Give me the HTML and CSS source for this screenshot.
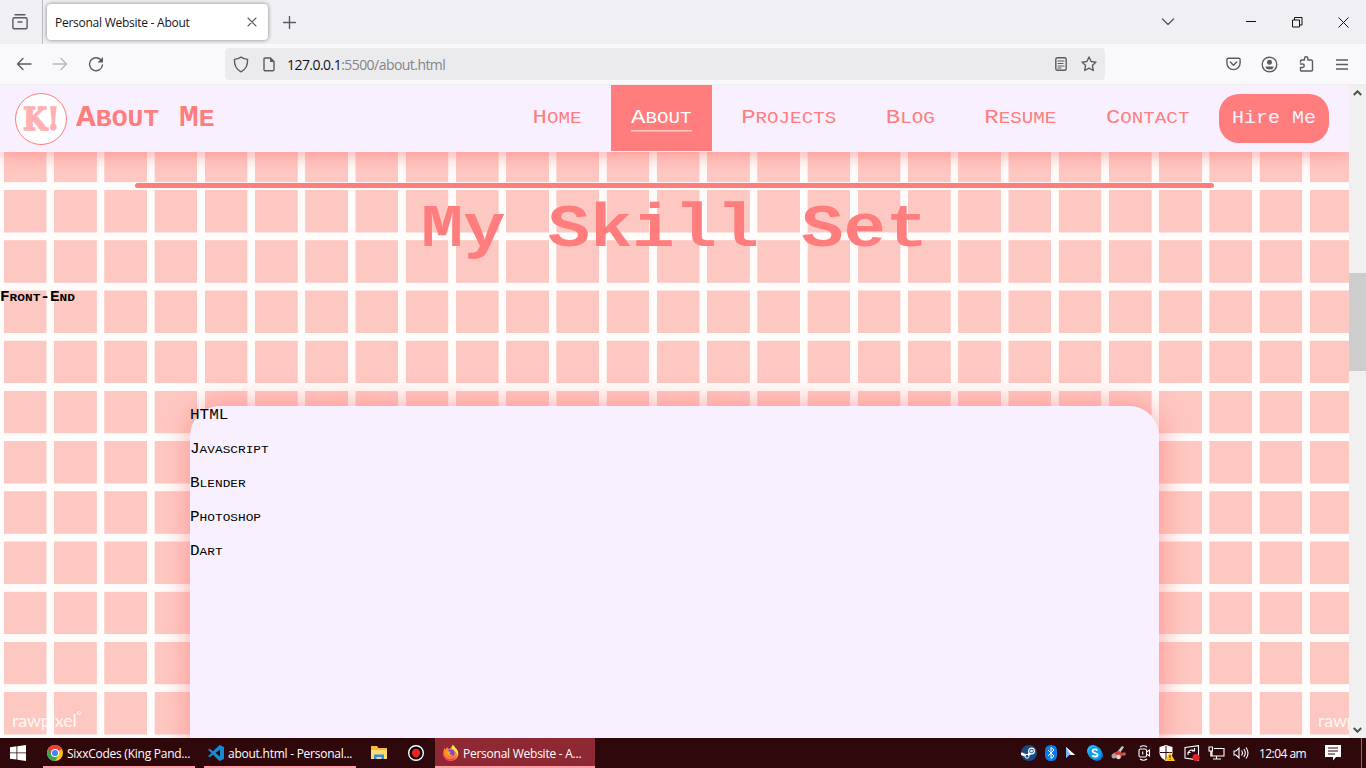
FILE: index.html
```html
<!DOCTYPE html>
<html lang="en">
<head>
<meta charset="utf-8">
<title>Personal Website - About</title>
<link rel="stylesheet" href="styles.css">
</head>
<body>
<div class="tabbar">
  <div class="tabview"><svg width="18" height="18" viewBox="0 0 18 18" class="ic"><path d="M4 1.8h10M3.5 4.8h11a1.6 1.6 0 0 1 1.6 1.6v7.5a1.9 1.9 0 0 1-1.9 1.9H3.8a1.9 1.9 0 0 1-1.9-1.9V6.4a1.6 1.6 0 0 1 1.6-1.6zM7 9h4"/></svg></div>
  <div class="tab"><span class="tabtitle">Personal Website - About</span><svg width="10" height="10" viewBox="0 0 10 10" class="ic thin"><path d="M1 1l8 8M9 1L1 9"/></svg></div>
  <svg width="13" height="13" viewBox="0 0 13 13" class="ic plus"><path d="M6.5 .5v12M.5 6.5h12"/></svg>
  <div class="winbtns">
    <svg width="14" height="8" viewBox="0 0 14 8" class="ic"><path d="M1.5 1L7 6.5 12.500 1"/></svg>
    <svg width="10" height="10" viewBox="0 0 10 10" class="win"><path d="M0 4.500h10"/></svg>
    <svg width="11" height="11" viewBox="0 0 11 11" class="win"><path d="M.5 3h7v7h-7zM2.500 3V.5h7.500v7.500H7.500"/></svg>
    <svg width="11" height="11" viewBox="0 0 11 11" class="win"><path d="M.5.5l10 10M10.500.5l-10 10"/></svg>
  </div>
</div>
<div class="toolbar">
  <div class="navs">
    <svg width="16" height="14" viewBox="0 0 16 14" class="ic"><path d="M7 1.500L1.500 7 7 12.500M1.500 7H15"/></svg>
    <svg width="16" height="14" viewBox="0 0 16 14" class="ic dim"><path d="M9 1.500L14.500 7 9 12.500M14.500 7H1"/></svg>
    <svg width="16" height="16" viewBox="0 0 16 16" class="ic"><path d="M13.700 5A6.500 6.500 0 1 0 14.500 9"/><path d="M15 1v5.500H9.500z" class="fill"/></svg>
  </div>
  <div class="urlbar">
    <svg width="16" height="17" viewBox="0 0 16 17" class="ic"><path d="M8 1.200c2 1.300 4.200 2 6.600 2.200.2 5.500-1.600 10-6.600 12.400C3 13.400 1.200 8.900 1.400 3.400 3.800 3.200 6 2.500 8 1.200z"/></svg>
    <svg width="12" height="15" viewBox="0 0 12 15" class="ic"><path d="M2 1h5.500L11 4.500V12.500a1.300 1.300 0 0 1-1.300 1.300H2.300A1.300 1.300 0 0 1 1 12.500V2a1 1 0 0 1 1-1z"/><path d="M7 .8V5h4.200z" class="fill"/></svg>
    <span class="url">127.0.0.1<span class="path">:5500/about.html</span></span>
    <svg width="12" height="14" viewBox="0 0 12 14" class="ic reader"><rect x=".8" y=".8" width="10.400" height="12.400" rx="1.500"/><path d="M3 4h6M3 6.500h5M3 9h6M3 11h3" class="thin"/></svg>
    <svg width="16" height="16" viewBox="0 0 16 16" class="ic"><path d="M8 1l2.100 4.500 4.900.6-3.600 3.400.9 5L8 12.100l-4.300 2.400.9-5L1 6.100l4.900-.6z"/></svg>
  </div>
  <div class="tools">
    <svg width="15" height="14" viewBox="0 0 15 14" class="ic"><path d="M2.300 1.200h10.400a1.400 1.400 0 0 1 1.400 1.400V6a6.600 6.600 0 0 1-13.200 0V2.600a1.400 1.400 0 0 1 1.400-1.400zM4.300 5l3.200 3.200L10.700 5"/></svg>
    <svg width="17" height="17" viewBox="0 0 17 17" class="ic"><circle cx="8.500" cy="8.500" r="7.300"/><circle cx="8.500" cy="6.200" r="2.500" class="fill"/><path d="M4.500 10.500h8q0 3-4 3t-4-3z" class="fill"/></svg>
    <svg width="15" height="16" viewBox="0 0 15 16" class="ic"><path d="M1.500 6V5a1 1 0 0 1 1-1H5.500V2.500a1.700 1.700 0 0 1 3.400 0V4H12a1.500 1.500 0 0 1 1.500 1.500V14a1 1 0 0 1-1 1H2.500a1 1 0 0 1-1-1V11.500H3.500a1.700 1.700 0 0 0 0-3.500H1.500"/></svg>
    <svg width="12" height="11" viewBox="0 0 12 11" class="ic"><path d="M0 1h12M0 5.500h12M0 10h12"/></svg>
  </div>
</div>
<div class="viewport">
  <div class="page">
    <header class="header">
      <div class="logo"><span>K!</span></div>
      <h1 class="brand caps squat">A<small>BOUT</small> M<small>E</small></h1>
      <nav class="nav">
        <a class="caps"><span class="squat">H<small>OME</small></span></a>
        <a class="caps active"><span class="squat">A<small>BOUT</small></span></a>
        <a class="caps"><span class="squat">P<small>ROJECTS</small></span></a>
        <a class="caps"><span class="squat">B<small>LOG</small></span></a>
        <a class="caps"><span class="squat">R<small>ESUME</small></span></a>
        <a class="caps"><span class="squat">C<small>ONTACT</small></span></a>
      </nav>
      <button class="hire"><span class="squat">Hire Me</span></button>
    </header>
    <main class="content">
      <div class="rule"></div>
      <h2 class="title squat">My Skill Set</h2>
      <h4 class="group caps squat">F<small>RONT</small>-E<small>ND</small></h4>
      <section class="card">
        <p class="caps squat">HTML</p>
        <p class="caps squat">J<small>AVASCRIPT</small></p>
        <p class="caps squat">B<small>LENDER</small></p>
        <p class="caps squat">P<small>HOTOSHOP</small></p>
        <p class="caps squat">D<small>ART</small></p>
      </section>
    </main>
    <span class="mark">rawpixel<sup>°</sup></span>
    <span class="mark second">rawp</span>
  </div>
  <div class="scroll">
    <svg width="9" height="6" viewBox="0 0 9 6"><path d="M.8 5L4.500 1.300 8.200 5"/></svg>
    <div class="thumb"></div>
    <svg width="9" height="6" viewBox="0 0 9 6" class="down"><path d="M.8 1L4.500 4.700 8.200 1"/></svg>
  </div>
</div>
<div class="taskbar">
  <div class="start"><svg width="16" height="16" viewBox="0 0 16 16"><path fill="#fff" d="M0 2.200L6.500 1.300v6.200H0zM7.300 1.200L16 0v7.500H7.300zM0 8.300h6.500v6.300L0 13.700zM7.300 8.300H16V16l-8.700-1.200z"/></svg></div>
  <div class="app">
    <svg width="16" height="16" viewBox="0 0 16 16"><circle cx="8" cy="8" r="8" fill="#fbc116"/><path d="M8 8L1.100 4A8 8 0 0 1 14.900 4z" fill="#ea4335"/><path d="M1.100 4A8 8 0 0 0 8 16l3.500-6L8 8z" fill="#34a853"/><path d="M1.100 4L4.500 10 8 4h6.900A8 8 0 0 0 1.100 4z" fill="#ea4335"/><circle cx="8" cy="8" r="4" fill="#fff"/><circle cx="8" cy="8" r="3.100" fill="#4285f4"/></svg>
    <span>SixxCodes (King Pand...</span></div>
  <div class="app code">
    <svg width="16" height="16" viewBox="0 0 16 16"><path fill="#168bd2" d="M11.500 0L16 2v12l-4.500 2L5 9.700l-3.300 2.600L0 11.300 3.500 8 0 4.700l1.700-1L5 6.300zM12 4.500L7.500 8l4.500 3.500z"/></svg>
    <span>about.html - Personal...</span></div>
  <svg class="folder" width="16" height="14" viewBox="0 0 16 14"><path d="M0 0h6l1.500 2H16v11H0z" fill="#f5b93b"/><path d="M0 4h16v9H0z" fill="#ffdb73"/><path d="M3 13V8.500h10V13h-2.500v-2h-5v2z" fill="#3690da"/></svg>
  <svg class="rec" width="16" height="16" viewBox="0 0 16 16"><circle cx="8" cy="8" r="7.300" fill="#000" stroke="#fff" stroke-width="1.400"/><circle cx="8" cy="8" r="4.200" fill="#ef2420"/></svg>
  <div class="app current">
    <svg width="16" height="16" viewBox="0 0 16 16"><path d="M1.500 3l1.200 1.500L4 2l1.500 2C7.500 4 8.500 2 9.500 0c2 1 2.500 2.500 4 4 3.500 4 2 11.500-5.500 12C1 16-1.500 9.500 1.500 3z" fill="#ff8a24"/><path d="M9.500 0c2 1 2.500 2.500 4 4 2 2.500 2.200 5 1 7.500C14 7 11 5 8.300 3.500z" fill="#ffe14a"/><path d="M.5 8c1 5 5 6.500 8.500 5.500 2-.5 3-1.500 4-2.500-.5 3-3 5-5.500 5C3 16 0 12.500.5 8z" fill="#ff3a5c"/><circle cx="8" cy="8" r="3.600" fill="#7a45e0"/><path d="M3.500 6.500c2-.8 3 .5 4.500.3L6.500 8.500C7 10 9 10 10 9.500 8 12.500 3.500 11 3.500 6.500z" fill="#ffab2b"/></svg>
    <span>Personal Website - A...</span></div>
  <div class="tray">
    <svg width="16" height="16" viewBox="0 0 16 16"><circle cx="8" cy="8" r="8" fill="#1b4a80"/><path d="M0 8.500l6 2.500 3.500-3" stroke="#fff" stroke-width="2.600" fill="none"/><circle cx="10.500" cy="6" r="2.900" fill="#1b4a80" stroke="#fff" stroke-width="1.200"/><circle cx="10.500" cy="6" r="1.500" fill="#dce6f0"/><circle cx="6" cy="11.300" r="1.900" fill="#1b4a80" stroke="#fff"/></svg>
    <svg width="12" height="16" viewBox="0 0 12 16"><rect width="12" height="16" rx="5.500" fill="#0a7bea"/><path d="M3 5l6 6-3 2.500v-11L9 5l-6 6" stroke="#fff" fill="none"/></svg>
    <svg width="10" height="12" viewBox="0 0 10 12"><path d="M1 0l9 8H4l-3 3z" fill="#b9adff"/><path d="M1 0v11l3-3z" fill="#64bcff"/><path d="M1 0l9 8H6z" fill="#fff"/></svg>
    <svg class="skype" width="16" height="16" viewBox="0 0 16 16"><circle cx="6" cy="6" r="6" fill="#29b8f5"/><circle cx="10" cy="10" r="6" fill="#0a6fcb"/><circle cx="8" cy="8" r="6.700" fill="#0c9fe6"/><path d="M10.500 5.500C9.500 4 5.600 4 5.600 6.200S10.600 7.600 10.600 9.800 6.500 12 5.300 10.300" stroke="#fff" stroke-width="1.800" fill="none"/></svg>
    <svg width="15" height="14" viewBox="0 0 15 14"><path d="M6 6l5-6 2 1-4 6z" fill="#c9c4c5"/><path d="M2 7l6-2 5 3-4 4-6-1z" fill="#cb4437"/><circle cx="3" cy="10" r="2.500" fill="#aaa5a6"/><circle cx="7.500" cy="11" r="2.300" fill="#d9d5d5"/><circle cx="13" cy="8" r="1.800" fill="#b8625a"/></svg>
    <svg class="cam" width="13" height="16" viewBox="0 0 13 16"><rect x="1" y="4" width="7.500" height="8" rx="1.500"/><path d="M8.500 7L11.500 5v6L8.500 9M2 2Q5.500-.5 9 2M2 14q3.500 2.500 7 0M4.700 6.500v3"/></svg>
    <svg width="16" height="16" viewBox="0 0 16 16"><path d="M7 0l6.500 2v6c0 3-3 6-6.500 8C3.500 14 .5 11 .5 8V2z" fill="#fff"/><path d="M7 1v14M1 7.500h12" stroke="#2c080c"/><path d="M11 7l5 9H6z" fill="#ffc61a"/><path d="M11 10v3m0 1v1" stroke="#222"/></svg>
    <svg width="17" height="16" viewBox="0 0 17 16" class="line"><path d="M2 2.500L15.500.7V15L2 13zM5 10V7.500h2.500M5.200 8A4 4 0 0 1 11 5.500M11.500 3v3H9"/><circle cx="13" cy="12.500" r="3.500" class="red"/></svg>
    <svg width="17" height="14" viewBox="0 0 17 14" class="line"><path d="M6 2.500h10v7.500H4V5M8.500 10v3M5 13h8M1 1h3.500v4H1zM2.800 5v5H5"/></svg>
    <svg width="16" height="14" viewBox="0 0 16 14" class="line"><path d="M1 5h2l3-3v10L3 9H1zM8.500 4.500q2 2.500 0 5M10.800 3q3 4 0 8M13 1.500q4 5.500 0 11"/></svg>
  </div>
  <span class="clock">12:04 am</span>
  <svg class="note" width="16" height="16" viewBox="0 0 16 16"><path d="M0 0h16v12H11l-3 3.500V12H0z" fill="#fff"/><path d="M3 3h10M3 6h10M3 9h7" stroke="#2c080c" stroke-width="1.200"/></svg>
  <div class="peek"></div>
</div>
</body>
</html>
```
FILE: styles.css
```css
* { box-sizing: border-box; }
body { margin: 0; width: 1366px; height: 768px; overflow: hidden; display: flex; flex-direction: column; font-family: "Open Sans", "Noto Sans", sans-serif; }
svg { flex: none; display: block; }
.ic { fill: none; stroke: #5b5b66; stroke-width: 1.4; stroke-linecap: round; stroke-linejoin: round; }
.ic .fill { fill: #5b5b66; stroke: none; }
.thin { stroke-width: 1.1; }
.dim { opacity: .4; }
.win { fill: none; stroke: #111; stroke-width: 1; }

.tabbar { height: 44px; flex: none; background: #f0f0f4; display: flex; align-items: center; }
.tabview { width: 43px; height: 44px; border-right: 1px solid #bbbbc2; display: flex; align-items: center; padding-left: 11px; }
.tab { width: 221px; height: 36px; margin-left: 4px; background: #fff; border-radius: 4px; box-shadow: 0 0 4px rgba(0,0,0,.45); display: flex; align-items: center; justify-content: space-between; padding: 0 11px 0 8px; font-size: 12px; color: #15141a; }
.tabtitle { letter-spacing: -.26px; white-space: nowrap; }
.plus { margin-left: 15px; }
.winbtns { margin-left: auto; display: flex; align-items: center; padding-right: 17px; }
.winbtns svg:nth-child(1) { margin-right: 71px; }
.winbtns svg:nth-child(2) { margin-right: 36px; }
.winbtns svg:nth-child(3) { margin-right: 35px; }

.toolbar { height: 41px; flex: none; background: #f9f9fb; border-bottom: 1px solid #efeff2; display: flex; align-items: center; }
.navs { display: flex; align-items: center; gap: 20px; padding-left: 16px; width: 225px; }
.urlbar { width: 880px; height: 32px; border-radius: 4px; background: #ebebed; display: flex; align-items: center; padding: 0 8px; }
.urlbar > svg + svg { margin-left: 14px; }
.url { margin-left: 12px; font-size: 14px; letter-spacing: -.55px; color: #15141a; }
.path { color: #858589; }
.urlbar .reader { margin-left: auto; }
.tools { margin-left: auto; display: flex; align-items: center; padding-right: 18px; }
.tools svg:nth-child(1) { margin-right: 20px; }
.tools svg:nth-child(2) { margin-right: 21px; }
.tools svg:nth-child(3) { margin-right: 22px; }

.viewport { height: 653px; flex: none; display: flex; }
.page { width: 1349px; height: 653px; position: relative; overflow: hidden; font-family: "Courier New", "Liberation Mono", monospace; background:
  repeating-linear-gradient(90deg, #fefdfc 0 3.6px, transparent 4.2px 46.2px, #fefdfc 46.8px 50.23px),
  repeating-linear-gradient(180deg, #fefdfc 0 4.4px, transparent 5px 46.8px, #fefdfc 47.4px 50.2px),
  #fec8c2; }
.caps small { font-size: .8em; }
.squat { transform: scaleY(.88); }
.header { height: 67px; background: #f8f0ff; position: relative; z-index: 2; display: flex; align-items: center; padding: 0 20px 0 15px; box-shadow: 0 0 20px rgba(255,125,125,.85); color: #ff7d7d; }
.logo { width: 52px; height: 52px; border: 1px solid #ff7d7d; border-radius: 50%; background: #fff; display: flex; align-items: center; justify-content: center; margin-top: 1px; }
.logo span { font: 700 31px/1 "DejaVu Serif", serif; color: #ffb0b0; -webkit-text-stroke: 1.5px #ffb0b0; transform: scaleX(.9); }
.brand { margin: 2px 0 0 9px; font-size: 33px; white-space: nowrap; line-height: 67px; }
.nav { margin-left: auto; display: flex; align-items: flex-start; gap: 9.6px; height: 67px; }
.nav a { height: 66px; padding: 0 20px; font-size: 24px; line-height: 66px; white-space: nowrap; }
.nav a span { display: inline-block; line-height: 26px; border-bottom: 1px solid transparent; }
.nav .active { background: #ff7d7d; color: #fff; }
.nav .active span { border-color: #fff; }
.hire { width: 110px; height: 49px; margin-left: 9.600px; padding: 0; border: 0; border-radius: 20px; background: #ff7d7d; color: #f8f0ff; font: 20px "Courier New", "Liberation Mono", monospace; }
.hire span { display: inline-block; }
.content { display: flex; flex-direction: column; }
.rule { width: 1079px; height: 5px; margin: 31px auto 0; border-radius: 3px; background: #ff7d7d; }
.title { margin: 0; height: 80px; line-height: 82px; font-size: 70.4px; text-align: center; color: #ff7d7d; }
.group { margin: 20px 0 0; height: 18px; font-size: 16px; line-height: 18px; color: #000; }
.card { margin: 100px 190px 0; height: 400px; flex: none; background: #f8f0ff; border-radius: 30px 30px 0 0; box-shadow: 1px 0 30px rgba(255,125,125,.72); display: flex; flex-direction: column; gap: 16px; }
.card p { margin: 0; height: 18px; font-size: 16px; line-height: 18px; }
.mark { position: absolute; left: 12px; top: 624px; font: 400 18px/22px Lato, sans-serif; letter-spacing: -.2px; color: rgba(255,255,255,.85); }
.mark.second { left: 1318px; width: 31px; overflow: hidden; }
.mark sup { font-size: 12px; line-height: 0; }
.scroll { width: 17px; background: #f0f0f0; display: flex; flex-direction: column; align-items: center; padding-top: 5px; }
.scroll svg { fill: none; stroke: #505050; stroke-width: 2; }
.thumb { width: 17px; height: 98px; background: #cdcdcd; margin-top: 177px; }
.down { margin-top: auto; margin-bottom: 5px; }

.taskbar { height: 30px; flex: none; background: #2f080c; color: #fff; display: flex; align-items: center; font-size: 12px; }
.start { width: 43px; padding-left: 10px; }
.app { width: 152px; height: 30px; border-bottom: 2px solid #ff9ea9; display: flex; align-items: center; gap: 4px; padding: 2px 0 0 4px; white-space: nowrap; letter-spacing: -.25px; margin-right: 9px; }
.code { margin-right: 0; }
.folder { margin-left: 15px; }
.rec { margin: 0 11px 0 21px; }
.current { width: 160px; background: #8e2833; padding-left: 8px; margin-right: 0; }
.tray { display: flex; align-items: center; margin-left: auto; gap: 8px; }
.tray .skype { margin-left: 4px; }
.tray .cam { margin-left: 4px; }
.line, .cam { fill: none; stroke: #fff; stroke-width: 1.1; }
.line .red { fill: #e5202b; stroke: none; }
.clock { width: 48px; margin-left: 10px; white-space: nowrap; letter-spacing: -.55px; }
.note { margin-left: 18px; }
.peek { width: 5px; height: 30px; border-left: 1px solid #856c6e; margin-left: 20px; }
```
